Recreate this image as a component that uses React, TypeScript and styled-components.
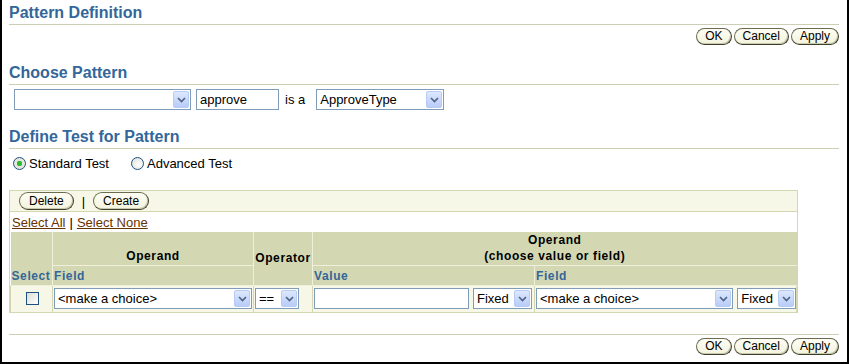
import styled, { createGlobalStyle } from "styled-components";

const GlobalStyle = createGlobalStyle`
  html, body {
    margin: 0;
    padding: 0;
    background: #fff;
  }
  body {
    font-family: "Liberation Sans", Arial, sans-serif;
    font-size: 13px;
    color: #000;
  }
`;

const Chevron = () => (
  <svg width="9" height="6" viewBox="0 0 9 6">
    <path d="M1 1 L4.5 4.5 L8 1" fill="none" stroke="#4d6185" strokeWidth="1.6" />
  </svg>
);

interface SelectProps {
  width: number;
  value?: string;
}
const Select: React.FC<SelectProps> = ({ width, value }) => (
  <SelectBox $w={width}>
    <span>{value}</span>
    <ArrowButton>
      <Chevron />
    </ArrowButton>
  </SelectBox>
);

const Buttons = () => (
  <ButtonBar>
    <PillButton>OK</PillButton>
    <PillButton>Cancel</PillButton>
    <PillButton>Apply</PillButton>
  </ButtonBar>
);

const App = () => {
  return (
    <>
      <GlobalStyle />
      <Frame>
        <SectionTitle $top={4}>Pattern Definition</SectionTitle>
        <Buttons />

        <SectionTitle $top={19}>Choose Pattern</SectionTitle>
        <PatternRow>
          <Select width={177} />
          <TextInput $w={83} defaultValue="approve" />
          <Label>is a</Label>
          <Select width={128} value="ApproveType" />
        </PatternRow>

        <SectionTitle $top={18}>Define Test for Pattern</SectionTitle>
        <RadioRow>
          <RadioItem>
            <Radio $checked />
            Standard Test
          </RadioItem>
          <RadioItem>
            <Radio />
            Advanced Test
          </RadioItem>
        </RadioRow>

        <TestBox>
          <Toolbar>
            <PillButton $wide>Delete</PillButton>
            <Divider>|</Divider>
            <PillButton $wide>Create</PillButton>
          </Toolbar>
          <LinkRow>
            <Link>Select All</Link>
            <Divider>|</Divider>
            <Link>Select None</Link>
          </LinkRow>
          <Grid>
            <colgroup>
              <col style={{ width: 42 }} />
              <col style={{ width: 201 }} />
              <col style={{ width: 59 }} />
              <col style={{ width: 222 }} />
              <col />
            </colgroup>
            <thead>
              <tr>
                <HeadCell rowSpan={2} $blue $align="left">
                  Select
                </HeadCell>
                <HeadCell $h={32}>Operand</HeadCell>
                <HeadCell rowSpan={2} $middle>
                  Operator
                </HeadCell>
                <HeadCell colSpan={2} $h={32}>
                  Operand
                  <br />
                  (choose value or field)
                </HeadCell>
              </tr>
              <tr>
                <HeadCell $blue $align="left" $h={18}>
                  Field
                </HeadCell>
                <HeadCell $blue $align="left" $h={18}>
                  Value
                </HeadCell>
                <HeadCell $blue $align="left" $h={18}>
                  Field
                </HeadCell>
              </tr>
            </thead>
            <tbody>
              <tr>
                <DataCell $center>
                  <Checkbox />
                </DataCell>
                <DataCell>
                  <Select width={198} value="<make a choice>" />
                </DataCell>
                <DataCell>
                  <Select width={44} value="==" />
                </DataCell>
                <DataCell>
                  <CellRow>
                    <TextInput $w={155} />
                    <Select width={59} value="Fixed" />
                  </CellRow>
                </DataCell>
                <DataCell>
                  <CellRow>
                    <Select width={198} value="<make a choice>" />
                    <Select width={59} value="Fixed" />
                  </CellRow>
                </DataCell>
              </tr>
            </tbody>
          </Grid>
        </TestBox>

        <BottomLine />
        <Buttons />
      </Frame>
    </>
  );
};

export default App;

const Frame = styled.div`
  box-sizing: border-box;
  width: 849px;
  height: 364px;
  padding: 0 8px 0 7px;
  border-left: 2px solid #000;
  border-right: 2px solid #000;
  border-bottom: 2px solid #000;
  display: flex;
  flex-direction: column;
  overflow: hidden;
`;

const SectionTitle = styled.div<{ $top: number }>`
  margin-top: ${(p) => p.$top}px;
  padding-bottom: 2px;
  font-size: 16px;
  font-weight: 700;
  line-height: 18px;
  color: #336699;
  border-bottom: 1px solid #cccfb3;
`;

const ButtonBar = styled.div`
  margin-top: 3px;
  display: flex;
  justify-content: flex-end;
  gap: 2px;
`;

const PillButton = styled.button<{ $wide?: boolean }>`
  box-sizing: border-box;
  height: ${(p) => (p.$wide ? 18 : 17)}px;
  padding: 0 ${(p) => (p.$wide ? 9 : 8)}px;
  font-family: "Liberation Sans", Arial, sans-serif;
  font-size: 12px;
  line-height: 15px;
  color: #000;
  background: linear-gradient(#fdfdf4, #f3f3df);
  border: 1px solid #6b6b50;
  border-right-color: #3d3d2a;
  border-bottom-color: #3d3d2a;
  border-radius: 9px;
  box-shadow: inset -1px -1px 0 #c9c9ad;
  cursor: pointer;
`;

const PatternRow = styled.div`
  margin-top: 4px;
  padding-left: 5px;
  display: flex;
  align-items: center;
  gap: 5px;
`;

const Label = styled.span`
  margin: 0 6px 0 1px;
`;

const SelectBox = styled.div<{ $w: number }>`
  box-sizing: border-box;
  width: ${(p) => p.$w}px;
  height: 21px;
  border: 1px solid #7f9db9;
  background: #fff;
  display: flex;
  align-items: center;
  justify-content: space-between;
  span {
    padding-left: 3px;
    white-space: nowrap;
    overflow: hidden;
    font-size: 13px;
  }
`;

const ArrowButton = styled.div`
  flex: none;
  width: 16px;
  height: 17px;
  margin-right: 1px;
  border: 1px solid #b8cbf5;
  border-radius: 2px;
  box-sizing: border-box;
  background: linear-gradient(#dde8fe, #b8ccf8);
  display: flex;
  align-items: center;
  justify-content: center;
`;

const TextInput = styled.input<{ $w: number }>`
  box-sizing: border-box;
  width: ${(p) => p.$w}px;
  height: 21px;
  padding: 0 3px;
  border: 1px solid #7f9db9;
  font-family: "Liberation Sans", Arial, sans-serif;
  font-size: 13px;
  color: #000;
  outline: none;
`;

const RadioRow = styled.div`
  margin-top: 7px;
  padding-left: 4px;
  display: flex;
  gap: 22px;
`;

const RadioItem = styled.label`
  display: flex;
  align-items: center;
  gap: 3px;
  height: 14px;
`;

const Radio = styled.span<{ $checked?: boolean }>`
  box-sizing: border-box;
  width: 13px;
  height: 13px;
  border-radius: 50%;
  border: 1px solid #1c5180;
  background: ${(p) =>
    p.$checked
      ? "radial-gradient(circle, #2fbd2f 0 2.5px, #e6e6e0 3px)"
      : "radial-gradient(circle at 60% 60%, #fff, #dcdcd4)"};
`;

const TestBox = styled.div`
  margin-top: 20px;
  width: 789px;
  box-sizing: border-box;
  border: 1px solid #d3d8b2;
  border-bottom: none;
`;

const Toolbar = styled.div`
  height: 20px;
  padding-left: 9px;
  display: flex;
  align-items: center;
  gap: 8px;
  background: #f7f7e7;
  border-bottom: 1px solid #d3d8b2;
`;

const Divider = styled.span`
  font-size: 13px;
`;

const LinkRow = styled.div`
  height: 20px;
  padding-left: 2px;
  display: flex;
  align-items: center;
  gap: 4px;
  background: #fff;
`;

const Link = styled.a`
  color: #663300;
  text-decoration: underline;
  cursor: pointer;
`;

const Grid = styled.table`
  width: 100%;
  border-collapse: collapse;
  table-layout: fixed;
`;

const HeadCell = styled.th<{
  $blue?: boolean;
  $align?: string;
  $middle?: boolean;
  $h?: number;
}>`
  ${(p) => (p.$h ? `height: ${p.$h}px;` : "")}
  padding: 0 1px 1px;
  background: #d3d8b2;
  border: 1px solid #eef0dc;
  border-top: none;
  font-size: 12px;
  font-weight: 700;
  line-height: 16px;
  letter-spacing: 0.6px;
  color: ${(p) => (p.$blue ? "#336699" : "#000")};
  text-align: ${(p) => p.$align || "center"};
  vertical-align: ${(p) => (p.$middle ? "middle" : "bottom")};
  &:first-child {
    border-left: none;
  }
  &:last-child {
    border-right: none;
  }
`;

const DataCell = styled.td<{ $center?: boolean }>`
  height: 21px;
  padding: 2px 0 3px 1px;
  background: #f7f7e7;
  border: 1px solid #d3d8b2;
  border-top: none;
  text-align: ${(p) => (p.$center ? "center" : "left")};
  vertical-align: middle;
`;

const CellRow = styled.div`
  display: flex;
  gap: 4px;
`;

const Checkbox = styled.span`
  display: inline-block;
  box-sizing: border-box;
  width: 13px;
  height: 13px;
  margin-top: 3px;
  border: 1px solid #1c5180;
  background: linear-gradient(135deg, #dcdcd7, #fff);
`;

const BottomLine = styled.div`
  margin-top: 21px;
  border-bottom: 1px solid #cccfb3;
`;
